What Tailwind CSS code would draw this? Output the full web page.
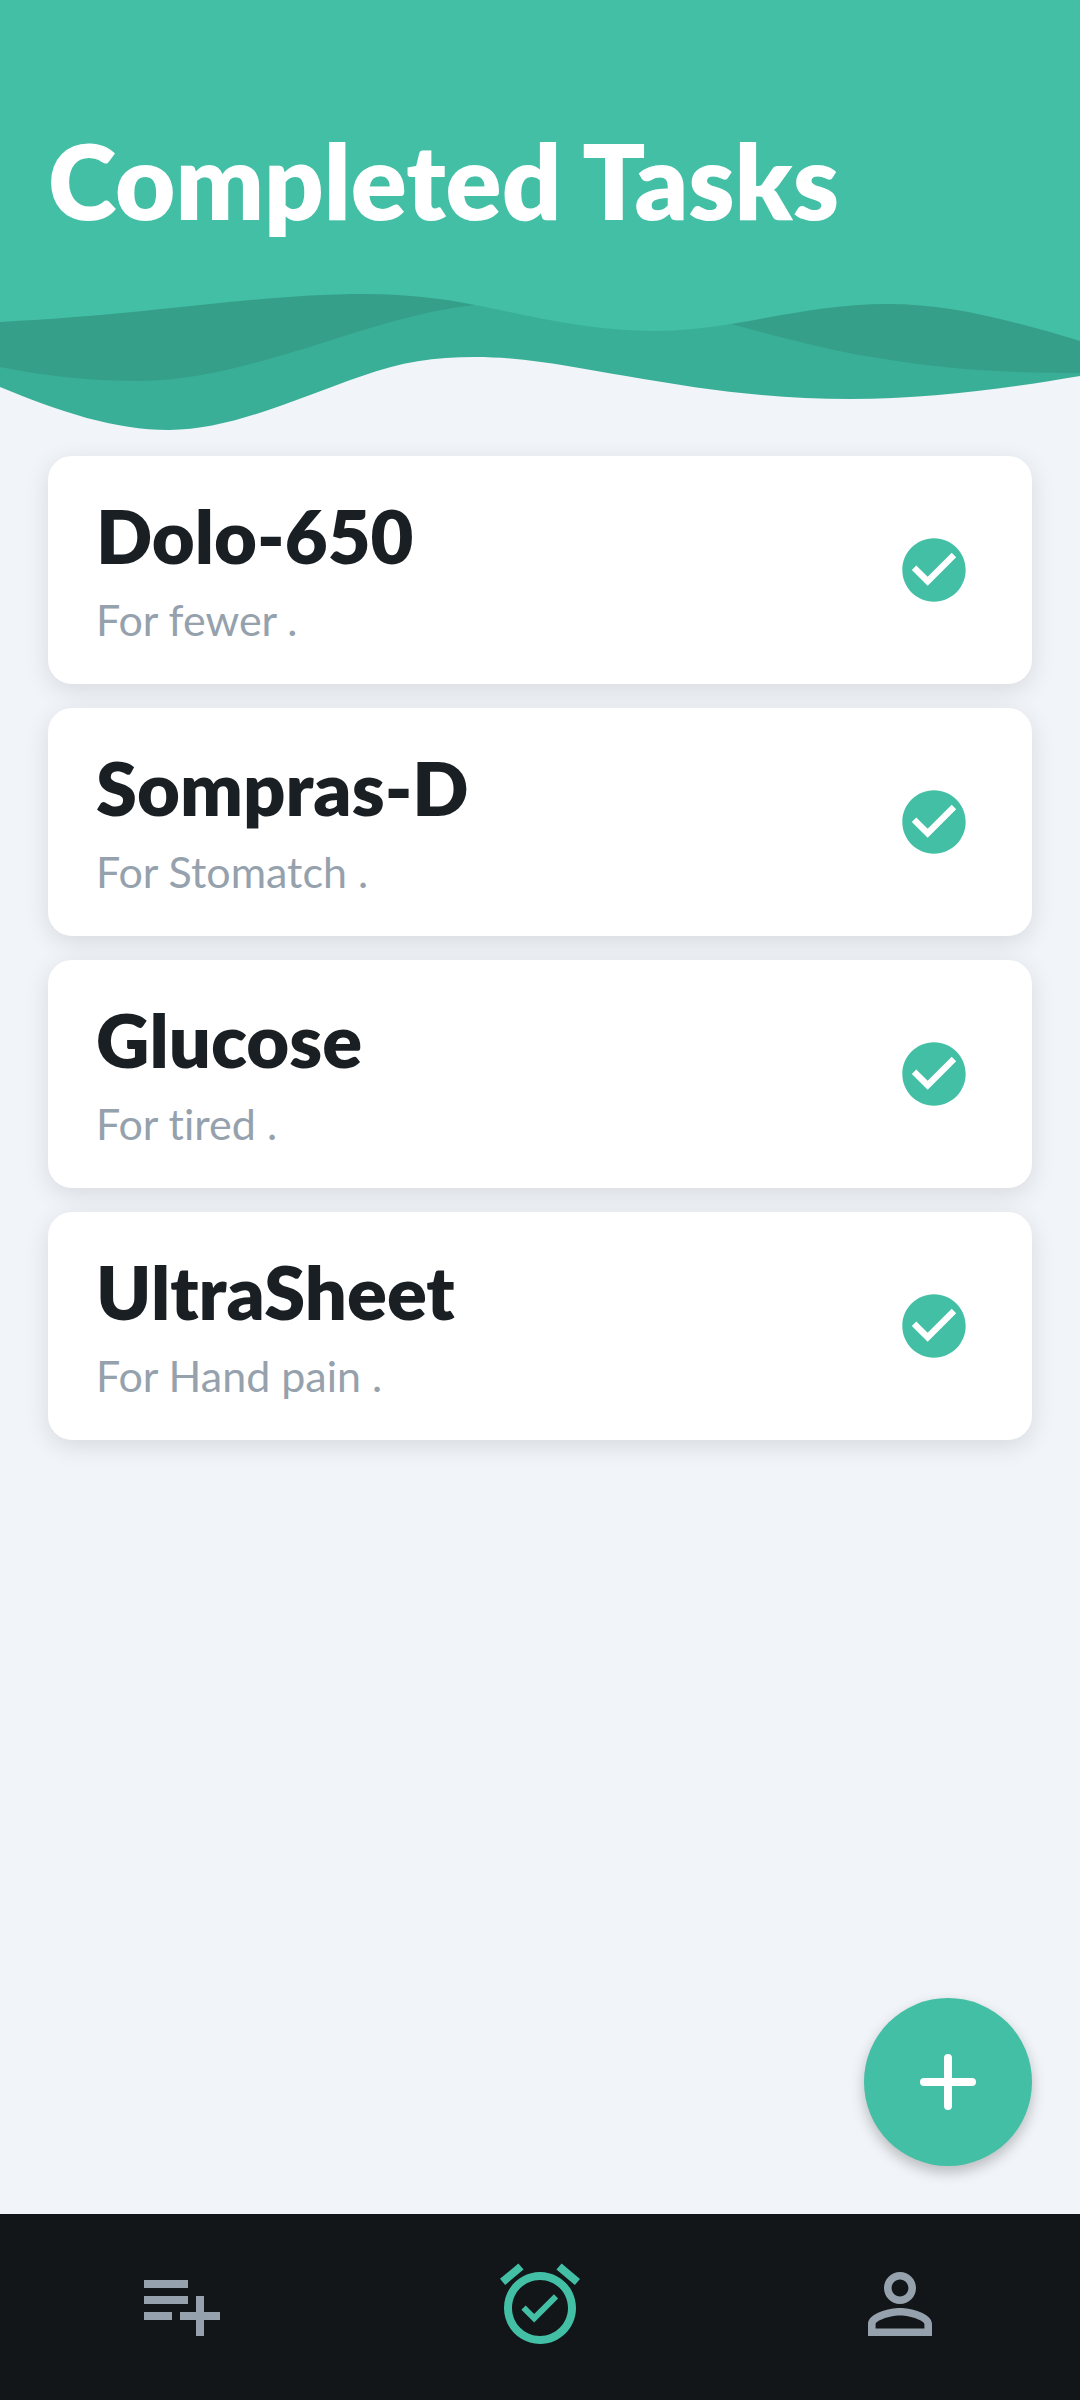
<!DOCTYPE html>
<html lang="en">
<head>
<meta charset="utf-8">
<meta name="viewport" content="width=device-width, initial-scale=1">
<title>Completed Tasks</title>
<script src="https://cdn.jsdelivr.net/npm/@tailwindcss/browser@4"></script>
</head>
<body class="flex min-h-screen flex-col bg-[#f1f4f8] font-[Lato,sans-serif] text-[#1a1f24] [font-variant-ligatures:none]">
  <header>
    <div class="bg-[#43bfa5] px-12 pt-[120px] pb-[50px]">
      <h1 class="text-[104px] leading-[120px] font-extrabold whitespace-nowrap text-white">Completed Tasks</h1>
    </div>
    <svg class="block h-36 w-full" viewBox="0 290 1080 144" preserveAspectRatio="none" aria-hidden="true">
      <path fill="#39af97" d="M0 290V387C60 412 115 430 169 430C232 430 300 397 362 376C400 362 435 357 475 357C530 357 580 369 626 376C700 389 770 399 850 399C930 399 1010 388 1080 376V290Z"/>
      <path fill="#369f89" d="M0 290V367C50 377 95 381 138 381C200 381 255 363 310 347C365 329 420 311 475 305L731 324C790 340 840 353 884 359C950 370 1010 373 1080 373V290Z"/>
      <path fill="#43bfa5" d="M0 289V322C160 314 255 294 365 294C405 294 440 298 475 305C535 317 590 331 654 331C680 331 706 328 731 324C785 315 830 304 888 304C950 304 1010 320 1080 341V289Z"/>
    </svg>
  </header>

  <main class="relative flex-1 px-12 pt-[22px] pb-12">
    <ul class="flex flex-col gap-6">
      <li class="flex items-center justify-between rounded-3xl bg-white py-[38px] pr-15 pl-12 shadow-[0_6px_24px_rgba(0,0,0,0.11)]">
        <div>
          <h2 class="text-[74px] leading-[84px] font-extrabold">Dolo-650</h2>
          <p class="mt-4 text-[43px] leading-[52px] text-[#95a1ac]">For fewer .</p>
        </div>
        <button type="button" aria-label="Dolo-650 completed"><svg class="size-[76px]" viewBox="0 0 24 24" fill="#43bfa5"><path d="M12 2C6.48 2 2 6.48 2 12s4.48 10 10 10 10-4.48 10-10S17.52 2 12 2zm-2 15l-5-5 1.41-1.41L10 14.17l7.59-7.59L19 8l-9 9z"/></svg></button>
      </li>
      <li class="flex items-center justify-between rounded-3xl bg-white py-[38px] pr-15 pl-12 shadow-[0_6px_24px_rgba(0,0,0,0.11)]">
        <div>
          <h2 class="text-[74px] leading-[84px] font-extrabold">Sompras-D</h2>
          <p class="mt-4 text-[43px] leading-[52px] text-[#95a1ac]">For Stomatch .</p>
        </div>
        <button type="button" aria-label="Sompras-D completed"><svg class="size-[76px]" viewBox="0 0 24 24" fill="#43bfa5"><path d="M12 2C6.48 2 2 6.48 2 12s4.48 10 10 10 10-4.48 10-10S17.52 2 12 2zm-2 15l-5-5 1.41-1.41L10 14.17l7.59-7.59L19 8l-9 9z"/></svg></button>
      </li>
      <li class="flex items-center justify-between rounded-3xl bg-white py-[38px] pr-15 pl-12 shadow-[0_6px_24px_rgba(0,0,0,0.11)]">
        <div>
          <h2 class="text-[74px] leading-[84px] font-extrabold">Glucose</h2>
          <p class="mt-4 text-[43px] leading-[52px] text-[#95a1ac]">For tired .</p>
        </div>
        <button type="button" aria-label="Glucose completed"><svg class="size-[76px]" viewBox="0 0 24 24" fill="#43bfa5"><path d="M12 2C6.48 2 2 6.48 2 12s4.48 10 10 10 10-4.48 10-10S17.52 2 12 2zm-2 15l-5-5 1.41-1.41L10 14.17l7.59-7.59L19 8l-9 9z"/></svg></button>
      </li>
      <li class="flex items-center justify-between rounded-3xl bg-white py-[38px] pr-15 pl-12 shadow-[0_6px_24px_rgba(0,0,0,0.11)]">
        <div>
          <h2 class="text-[74px] leading-[84px] font-extrabold">UltraSheet</h2>
          <p class="mt-4 text-[43px] leading-[52px] text-[#95a1ac]">For Hand pain .</p>
        </div>
        <button type="button" aria-label="UltraSheet completed"><svg class="size-[76px]" viewBox="0 0 24 24" fill="#43bfa5"><path d="M12 2C6.48 2 2 6.48 2 12s4.48 10 10 10 10-4.48 10-10S17.52 2 12 2zm-2 15l-5-5 1.41-1.41L10 14.17l7.59-7.59L19 8l-9 9z"/></svg></button>
      </li>
    </ul>
    <button type="button" aria-label="Add task" class="absolute right-12 bottom-12 flex size-42 items-center justify-center rounded-full bg-[#43bfa5] shadow-[0_6px_14px_rgba(0,0,0,0.24)]">
      <svg class="size-14" viewBox="0 0 56 56" fill="none" stroke="#fff" stroke-width="8" stroke-linecap="round"><path d="M28 4v48M4 28h48"/></svg>
    </button>
  </main>

  <nav class="relative flex bg-[#131619] pt-[42px] pb-12" aria-label="Main">
    <a href="#add" aria-label="Add to list" class="flex flex-1 justify-center"><svg class="size-24" viewBox="0 0 24 24" fill="#95a1ac"><path d="M14 10H3v2h11v-2zm0-4H3v2h11V6zm4 8v-4h-2v4h-4v2h4v4h2v-4h4v-2h-4zM3 16h7v-2H3v2z"/></svg></a>
    <a href="#completed" aria-label="Completed tasks" aria-current="page" class="flex flex-1 justify-center"><svg class="size-24" viewBox="0 0 24 24" fill="#43bfa5"><path d="M22 5.72l-4.6-3.86-1.29 1.53 4.6 3.86L22 5.72zM7.88 3.39L6.6 1.86 2 5.71l1.29 1.53 4.59-3.85zM12 4c-4.97 0-9 4.03-9 9s4.02 9 9 9c4.97 0 9-4.03 9-9s-4.03-9-9-9zm0 16c-3.87 0-7-3.13-7-7s3.13-7 7-7 7 3.13 7 7-3.13 7-7 7zm-1.46-5.47l-2.13-2.13-1.06 1.06 3.19 3.19 6-6-1.06-1.06-4.94 4.94z"/></svg></a>
    <a href="#profile" aria-label="Profile" class="flex flex-1 justify-center"><svg class="size-24" viewBox="0 0 24 24" fill="#95a1ac"><path d="M12 5.9c1.16 0 2.1.94 2.1 2.1s-.94 2.1-2.1 2.1S9.9 9.16 9.9 8s.94-2.1 2.1-2.1m0 9c2.97 0 6.1 1.46 6.1 2.1v1.1H5.9V17c0-.64 3.13-2.1 6.1-2.1M12 4C9.79 4 8 5.79 8 8s1.79 4 4 4 4-1.79 4-4-1.79-4-4-4zm0 9c-2.67 0-8 1.34-8 4v3h16v-3c0-2.66-5.33-4-8-4z"/></svg></a>
  </nav>
</body>
</html>
